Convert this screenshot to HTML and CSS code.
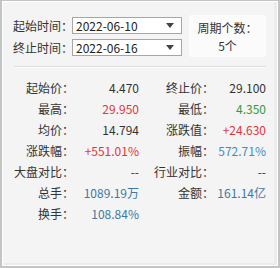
FILE: index.html
```html
<!DOCTYPE html>
<html>
<head>
    <title>区间统计</title>
    <link rel="stylesheet" href="styles.css">
</head>
<body>
    <div class="panel">
        <div class="top">
            <div class="dates">
                <div class="date-row">
                    <span class="date-label">起始时间：</span>
                    <div class="combo"><span>2022-06-10</span><i class="arrow"></i></div>
                </div>
                <div class="date-row">
                    <span class="date-label">终止时间：</span>
                    <div class="combo"><span>2022-06-16</span><i class="arrow"></i></div>
                </div>
            </div>
            <div class="period">
                <div>周期个数：</div>
                <div>5个</div>
            </div>
        </div>

        <div class="sep"></div>

        <div class="stats">
            <div class="row">
                <div class="cell left"><span class="lbl">起始价：</span><span class="val">4.470</span></div>
                <div class="cell"><span class="lbl">终止价：</span><span class="val">29.100</span></div>
            </div>
            <div class="row">
                <div class="cell left"><span class="lbl">最高：</span><span class="val red">29.950</span></div>
                <div class="cell"><span class="lbl">最低：</span><span class="val green">4.350</span></div>
            </div>
            <div class="row">
                <div class="cell left"><span class="lbl">均价：</span><span class="val">14.794</span></div>
                <div class="cell"><span class="lbl">涨跌值：</span><span class="val red">+24.630</span></div>
            </div>
            <div class="row">
                <div class="cell left"><span class="lbl">涨跌幅：</span><span class="val red">+551.01%</span></div>
                <div class="cell"><span class="lbl">振幅：</span><span class="val light-blue">572.71%</span></div>
            </div>
            <div class="row">
                <div class="cell left"><span class="lbl">大盘对比：</span><span class="val">--</span></div>
                <div class="cell"><span class="lbl">行业对比：</span><span class="val">--</span></div>
            </div>
            <div class="row">
                <div class="cell left"><span class="lbl">总手：</span><span class="val blue">1089.19万</span></div>
                <div class="cell"><span class="lbl">金额：</span><span class="val blue">161.14亿</span></div>
            </div>
            <div class="row">
                <div class="cell left"><span class="lbl">换手：</span><span class="val blue">108.84%</span></div>
                <div class="cell"></div>
            </div>
        </div>
    </div>
</body>
</html>
```

FILE: styles.css
```css
html, body {
    margin: 0;
    padding: 0;
}

body {
    font-family: "Noto Sans CJK SC", "Microsoft YaHei", sans-serif;
    font-size: 12px;
    color: #333;
    background: #c4c4c4;
}

.panel {
    width: 280px;
    height: 268px;
    box-sizing: border-box;
    border: 2px solid #c4c4c4;
    border-top-width: 1px;
    background: #f4f4f4;
    box-shadow: inset 1px 1px 0 #fff, inset -1px -1px 0 #fff, inset -4px -3px 0 #ececec;
    padding: 0 12px 0 11px;
}

/* top part with dates */
.top {
    display: flex;
    padding-top: 14px;
}

.dates {
    display: flex;
    flex-direction: column;
    gap: 5px;
    padding-top: 2px;
}

.date-row {
    display: flex;
    align-items: center;
    height: 17px;
}

.date-label {
    width: 59px;
    flex-shrink: 0;
    white-space: nowrap;
    line-height: 17px;
}

.combo {
    width: 98px;
    height: 15px;
    border: 1px solid #a6a6a6;
    background: #fff;
    display: flex;
    align-items: center;
    justify-content: space-between;
    padding: 0 7px 0 3px;
    line-height: 15px;
    color: #222;
}

.arrow {
    width: 0;
    height: 0;
    border-left: 4px solid transparent;
    border-right: 4px solid transparent;
    border-top: 5px solid #444;
}

.period {
    margin-left: 7px;
    width: 77px;
    height: 42px;
    background: #fbfbfb;
    border-radius: 2px;
    text-align: center;
    display: flex;
    flex-direction: column;
    justify-content: center;
    gap: 3px;
    line-height: 15px;
}

.sep {
    margin: 9px 0 0 1px;
    height: 1px;
    background: #dcdcdc;
    border-bottom: 1px solid #fff;
}

/* stats */
.stats {
    padding-top: 9px;
    padding-left: 1px;
}

.row {
    display: flex;
    height: 21px;
    align-items: center;
}

.cell {
    display: flex;
    flex: 1;
}

.cell.left {
    flex: none;
    width: 125px;
    margin-right: 15px;
}

.lbl {
    width: 60px;
    text-align: right;
}

.val {
    flex: 1;
    text-align: right;
}

.red {
    color: #e2363a;
}

.green {
    color: #2f9a3a;
}

.blue {
    color: #3d78a6;
}

.light-blue {
    color: #3f8cc4;
}
```
